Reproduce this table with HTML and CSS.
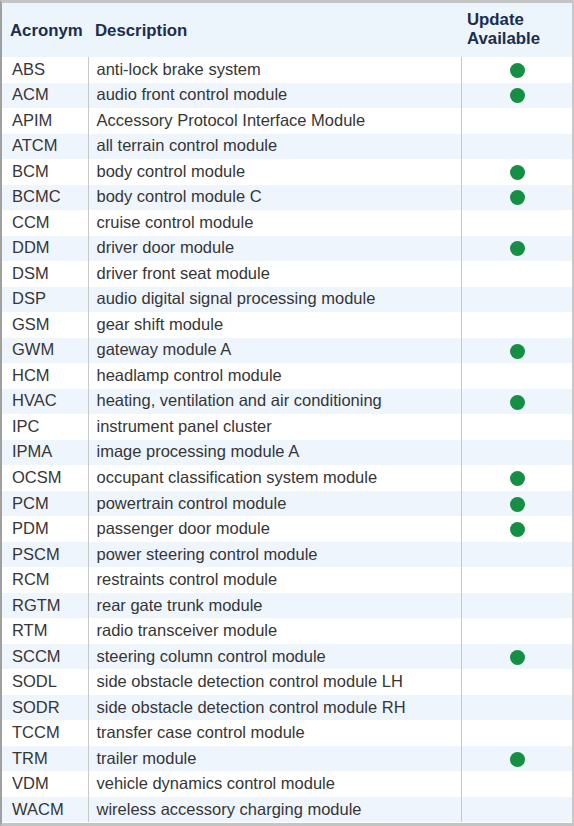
FILE: index.html
```
<!DOCTYPE html>
<html>
<head>
<meta charset="utf-8">
<link rel="stylesheet" href="styles.css">
</head>
<body>
<div class="frame">
<table class="modules">
<colgroup><col class="w-acr"><col class="w-desc"><col class="w-upd"></colgroup>
<thead>
<tr><th class="c-acr">Acronym</th><th class="c-desc">Description</th><th class="c-upd">Update<br>Available</th></tr>
</thead>
<tbody>
<tr><td class="c-acr">ABS</td><td class="c-desc">anti-lock brake system</td><td class="c-upd"><span class="dot"></span></td></tr>
<tr><td class="c-acr">ACM</td><td class="c-desc">audio front control module</td><td class="c-upd"><span class="dot"></span></td></tr>
<tr><td class="c-acr">APIM</td><td class="c-desc">Accessory Protocol Interface Module</td><td class="c-upd"></td></tr>
<tr><td class="c-acr">ATCM</td><td class="c-desc">all terrain control module</td><td class="c-upd"></td></tr>
<tr><td class="c-acr">BCM</td><td class="c-desc">body control module</td><td class="c-upd"><span class="dot"></span></td></tr>
<tr><td class="c-acr">BCMC</td><td class="c-desc">body control module C</td><td class="c-upd"><span class="dot"></span></td></tr>
<tr><td class="c-acr">CCM</td><td class="c-desc">cruise control module</td><td class="c-upd"></td></tr>
<tr><td class="c-acr">DDM</td><td class="c-desc">driver door module</td><td class="c-upd"><span class="dot"></span></td></tr>
<tr><td class="c-acr">DSM</td><td class="c-desc">driver front seat module</td><td class="c-upd"></td></tr>
<tr><td class="c-acr">DSP</td><td class="c-desc">audio digital signal processing module</td><td class="c-upd"></td></tr>
<tr><td class="c-acr">GSM</td><td class="c-desc">gear shift module</td><td class="c-upd"></td></tr>
<tr><td class="c-acr">GWM</td><td class="c-desc">gateway module A</td><td class="c-upd"><span class="dot"></span></td></tr>
<tr><td class="c-acr">HCM</td><td class="c-desc">headlamp control module</td><td class="c-upd"></td></tr>
<tr><td class="c-acr">HVAC</td><td class="c-desc">heating, ventilation and air conditioning</td><td class="c-upd"><span class="dot"></span></td></tr>
<tr><td class="c-acr">IPC</td><td class="c-desc">instrument panel cluster</td><td class="c-upd"></td></tr>
<tr><td class="c-acr">IPMA</td><td class="c-desc">image processing module A</td><td class="c-upd"></td></tr>
<tr><td class="c-acr">OCSM</td><td class="c-desc">occupant classification system module</td><td class="c-upd"><span class="dot"></span></td></tr>
<tr><td class="c-acr">PCM</td><td class="c-desc">powertrain control module</td><td class="c-upd"><span class="dot"></span></td></tr>
<tr><td class="c-acr">PDM</td><td class="c-desc">passenger door module</td><td class="c-upd"><span class="dot"></span></td></tr>
<tr><td class="c-acr">PSCM</td><td class="c-desc">power steering control module</td><td class="c-upd"></td></tr>
<tr><td class="c-acr">RCM</td><td class="c-desc">restraints control module</td><td class="c-upd"></td></tr>
<tr><td class="c-acr">RGTM</td><td class="c-desc">rear gate trunk module</td><td class="c-upd"></td></tr>
<tr><td class="c-acr">RTM</td><td class="c-desc">radio transceiver module</td><td class="c-upd"></td></tr>
<tr><td class="c-acr">SCCM</td><td class="c-desc">steering column control module</td><td class="c-upd"><span class="dot"></span></td></tr>
<tr><td class="c-acr">SODL</td><td class="c-desc">side obstacle detection control module LH</td><td class="c-upd"></td></tr>
<tr><td class="c-acr">SODR</td><td class="c-desc">side obstacle detection control module RH</td><td class="c-upd"></td></tr>
<tr><td class="c-acr">TCCM</td><td class="c-desc">transfer case control module</td><td class="c-upd"></td></tr>
<tr><td class="c-acr">TRM</td><td class="c-desc">trailer module</td><td class="c-upd"><span class="dot"></span></td></tr>
<tr><td class="c-acr">VDM</td><td class="c-desc">vehicle dynamics control module</td><td class="c-upd"></td></tr>
<tr><td class="c-acr">WACM</td><td class="c-desc">wireless accessory charging module</td><td class="c-upd"></td></tr>
</tbody>
</table>
</div>
</body>
</html>
```
FILE: styles.css
```
html, body {
  margin: 0;
  padding: 0;
  background: #ffffff;
}
.frame {
  width: 574px;
  height: 826px;
  box-sizing: border-box;
  border-top: 3px solid #c4c4c4;
  border-bottom: 3px solid #c4c4c4;
  border-left: 2px solid #a0a0a0;
  border-right: 2px solid #c8c8c8;
  background: #ffffff;
  overflow: hidden;
}
.modules {
  width: 570px;
  border-collapse: collapse;
  table-layout: fixed;
  font-family: "Liberation Sans", Arial, sans-serif;
  font-size: 16.5px;
}
.w-acr { width: 86px; }
.w-desc { width: 373px; }
.w-upd { width: 111px; }
.modules thead tr {
  height: 54px;
  background: #ecf4fc;
}
.modules th {
  text-align: left;
  font-weight: bold;
  color: #1c2e4c;
  font-size: 16.8px;
  line-height: 19px;
  vertical-align: middle;
  padding: 0;
}
.modules th.c-acr { padding-left: 8px; padding-top: 1px; }
.modules th.c-desc { padding-left: 7px; padding-top: 1px; }
.modules th.c-upd { padding-left: 6px; padding-bottom: 2px; }
.modules tbody tr {
  height: 25.53px;
}
.modules tbody tr:nth-child(even) {
  background: #eef5fd;
}
.modules td {
  padding: 0 0 2px 0;
  color: #363636;
  line-height: 18px;
  vertical-align: middle;
}
td.c-acr { padding-left: 10px; }
td.c-desc {
  padding-left: 8px;
  border-left: 1px solid #c8c8c8;
}
td.c-upd {
  border-left: 1px solid #c8c8c8;
  text-align: center;
}
.dot {
  display: inline-block;
  width: 15px;
  height: 15px;
  border-radius: 50%;
  background: #158f43;
  vertical-align: middle;
  margin-left: 1px;
}
```
